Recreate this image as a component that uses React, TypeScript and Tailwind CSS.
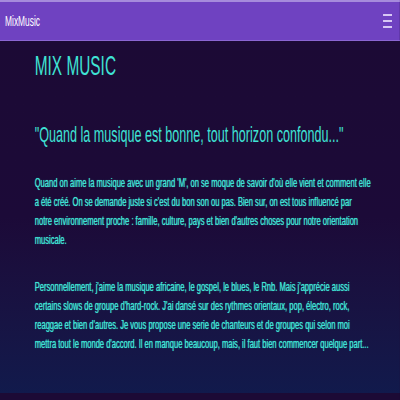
export default function App() {
  return (
    <div className="w-[400px] h-[400px] overflow-hidden bg-[#1c0a35]">
      {/* page is rendered wide and squeezed horizontally like the reference */}
      <div className="w-[714px] h-[400px] origin-top-left scale-x-[0.56] flex flex-col font-['Liberation_Sans',Arial,sans-serif]">
        <nav className="h-[41px] shrink-0 flex items-center justify-between pl-[9px] pr-[14px] bg-[#6f42c1] border-t-2 border-[#a68bdc] border-b border-b-[#8b66d2]">
          <span className="text-[15px] text-white">MixMusic</span>
          <div className="flex flex-col gap-[4px] w-[16px]">
            <span className="h-[2px] w-full bg-[#d8c8f4]" />
            <span className="h-[2px] w-full bg-[#d8c8f4]" />
            <span className="h-[2px] w-full bg-[#d8c8f4]" />
          </div>
        </nav>

        <main className="flex-1 bg-gradient-to-b from-[#1c0a35] via-[#1c0a38] to-[#111a4c] pl-[62px] pr-[46px] pt-[11px] text-[#3fe3d4]">
          <h1 className="text-[27.5px] leading-none">MIX MUSIC</h1>
          <h2 className="mt-[44px] text-[22.5px] leading-none">
            "Quand la musique est bonne, tout horizon confondu..."
          </h2>
          <p className="mt-[27px] text-[13.5px] leading-[19px] [text-shadow:0_0_1px_#3fe3d4]">
            Quand on aime la musique avec un grand 'M', on se moque de savoir d'où elle vient et comment elle a été créé. On se demande juste si c'est du bon son ou pas. Bien sur, on est tous influencé par
            <br />
            notre environnement proche : famille, culture, pays et bien d'autres choses pour notre orientation musicale.
          </p>
          <p className="mt-[28px] text-[13.5px] leading-[19px] [text-shadow:0_0_1px_#3fe3d4]">
            Personnellement, j'aime la musique africaine, le gospel, le blues, le Rnb. Mais j'apprécie aussi certains slows de groupe d'hard-rock. J'ai dansé sur des rythmes orientaux, pop, électro, rock, reaggae et bien d'autres. Je vous propose une serie de chanteurs et de groupes qui selon moi
            <br />
            mettra tout le monde d'accord. Il en manque beaucoup, mais, il faut bien commencer quelque part...
          </p>
        </main>

        <div className="h-[7px] shrink-0 bg-[#1c0a35]" />
      </div>
    </div>
  );
}
